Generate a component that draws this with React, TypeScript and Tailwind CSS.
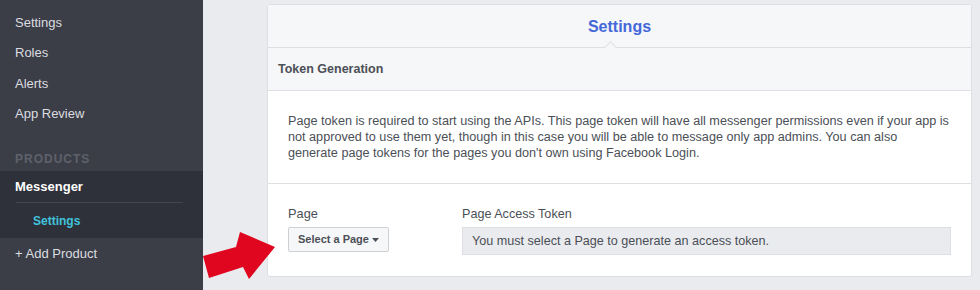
import React from "react";

const font = { fontFamily: '"Liberation Sans", Arial, Helvetica, sans-serif' };

function Sidebar() {
  return (
    <div className="w-[203px] h-full bg-[#3b3e47] flex flex-col shrink-0 pt-[7px]">
      {["Settings", "Roles", "Alerts", "App Review"].map((t) => (
        <div key={t} className="h-[30.5px] flex items-center pl-[15px] text-[13px] text-[#dcdde0]">
          {t}
        </div>
      ))}
      <div className="h-[42px] flex items-end pb-[3px] pl-[15px] text-[12px] font-bold tracking-[1px] text-[#5e616a]">
        PRODUCTS
      </div>
      <div className="bg-[#2f313a] h-[67px] flex flex-col">
        <div className="h-[31px] flex items-center pl-[15px] text-[13px] font-bold text-white">Messenger</div>
        <div className="mx-[16px] w-[167px] h-px bg-[#42454e]" />
        <div className="h-[35px] flex items-center pl-[33px] text-[12px] font-bold text-[#40c3dc]">Settings</div>
      </div>
      <div className="h-[31px] flex items-center pl-[15px] text-[13px] text-[#dcdde0]">+ Add Product</div>
    </div>
  );
}

function Card() {
  return (
    <div className="border border-[#dddfe2] rounded-[3px] bg-white flex flex-col text-[#4b4f56]">
      <div className="relative h-[42px] bg-[#f6f7f9] flex items-center justify-center">
        <span className="text-[16px] font-bold text-[#4568d8] pt-[1px]">Settings</span>
        <div className="absolute left-[338px] bottom-[-5px] w-[9px] h-[9px] rotate-45 bg-[#f6f7f9] border-l border-t border-[#dddfe2]" />
      </div>
      <div className="h-[43px] border-t border-[#dddfe2] bg-[#f6f7f9] flex items-center pl-[10px] text-[12.5px] font-bold text-[#4b4f56]">
        Token Generation
      </div>
      <div className="border-t border-[#dddfe2] pl-5 pr-2 pt-[22px] pb-[22px] text-[12.65px] leading-[16px] whitespace-nowrap">
        Page token is required to start using the APIs. This page token will have all messenger permissions even if your app is
        <br />
        not approved to use them yet, though in this case you will be able to message only app admins. You can also
        <br />
        generate page tokens for the pages you don&apos;t own using Facebook Login.
      </div>
      <div className="border-t border-[#dddfe2] px-5 pt-[22px] pb-[21px] flex">
        <div className="w-[174px] flex flex-col">
          <div className="text-[12.8px] leading-[16px] mb-[5px]">Page</div>
          <div className="w-[101px] h-[25px] border border-[#ced0d4] rounded-[2px] bg-[#f6f7f9] flex items-center pl-[9px] text-[11px] font-bold text-[#4b4f56]">
            Select a Page
            <svg width="7" height="4" viewBox="0 0 7 4" className="ml-[3px]">
              <path d="M0 0 L7 0 L3.5 4 Z" fill="#4b4f56" />
            </svg>
          </div>
        </div>
        <div className="flex-1 flex flex-col">
          <div className="text-[12.6px] leading-[16px] mb-[5px]">Page Access Token</div>
          <div className="h-[28px] border border-[#dddfe2] bg-[#e9ebee] flex items-center pl-[9px] text-[12.6px] text-[#4b4f56]">
            You must select a Page to generate an access token.
          </div>
        </div>
      </div>
    </div>
  );
}

export default function App() {
  return (
    <div className="relative w-[980px] h-[290px] flex bg-[#e9ebee] overflow-hidden" style={font}>
      <Sidebar />
      <div className="flex-1 pl-[64px] pr-[8px] pt-[4px]">
        <Card />
      </div>
      <svg className="absolute left-[200px] top-[225px]" width="80" height="60" viewBox="0 0 80 60">
        <polygon points="3,31 36,22 40,7 75,22 49,54 43,42 9,53" fill="#e0061f" />
      </svg>
    </div>
  );
}
